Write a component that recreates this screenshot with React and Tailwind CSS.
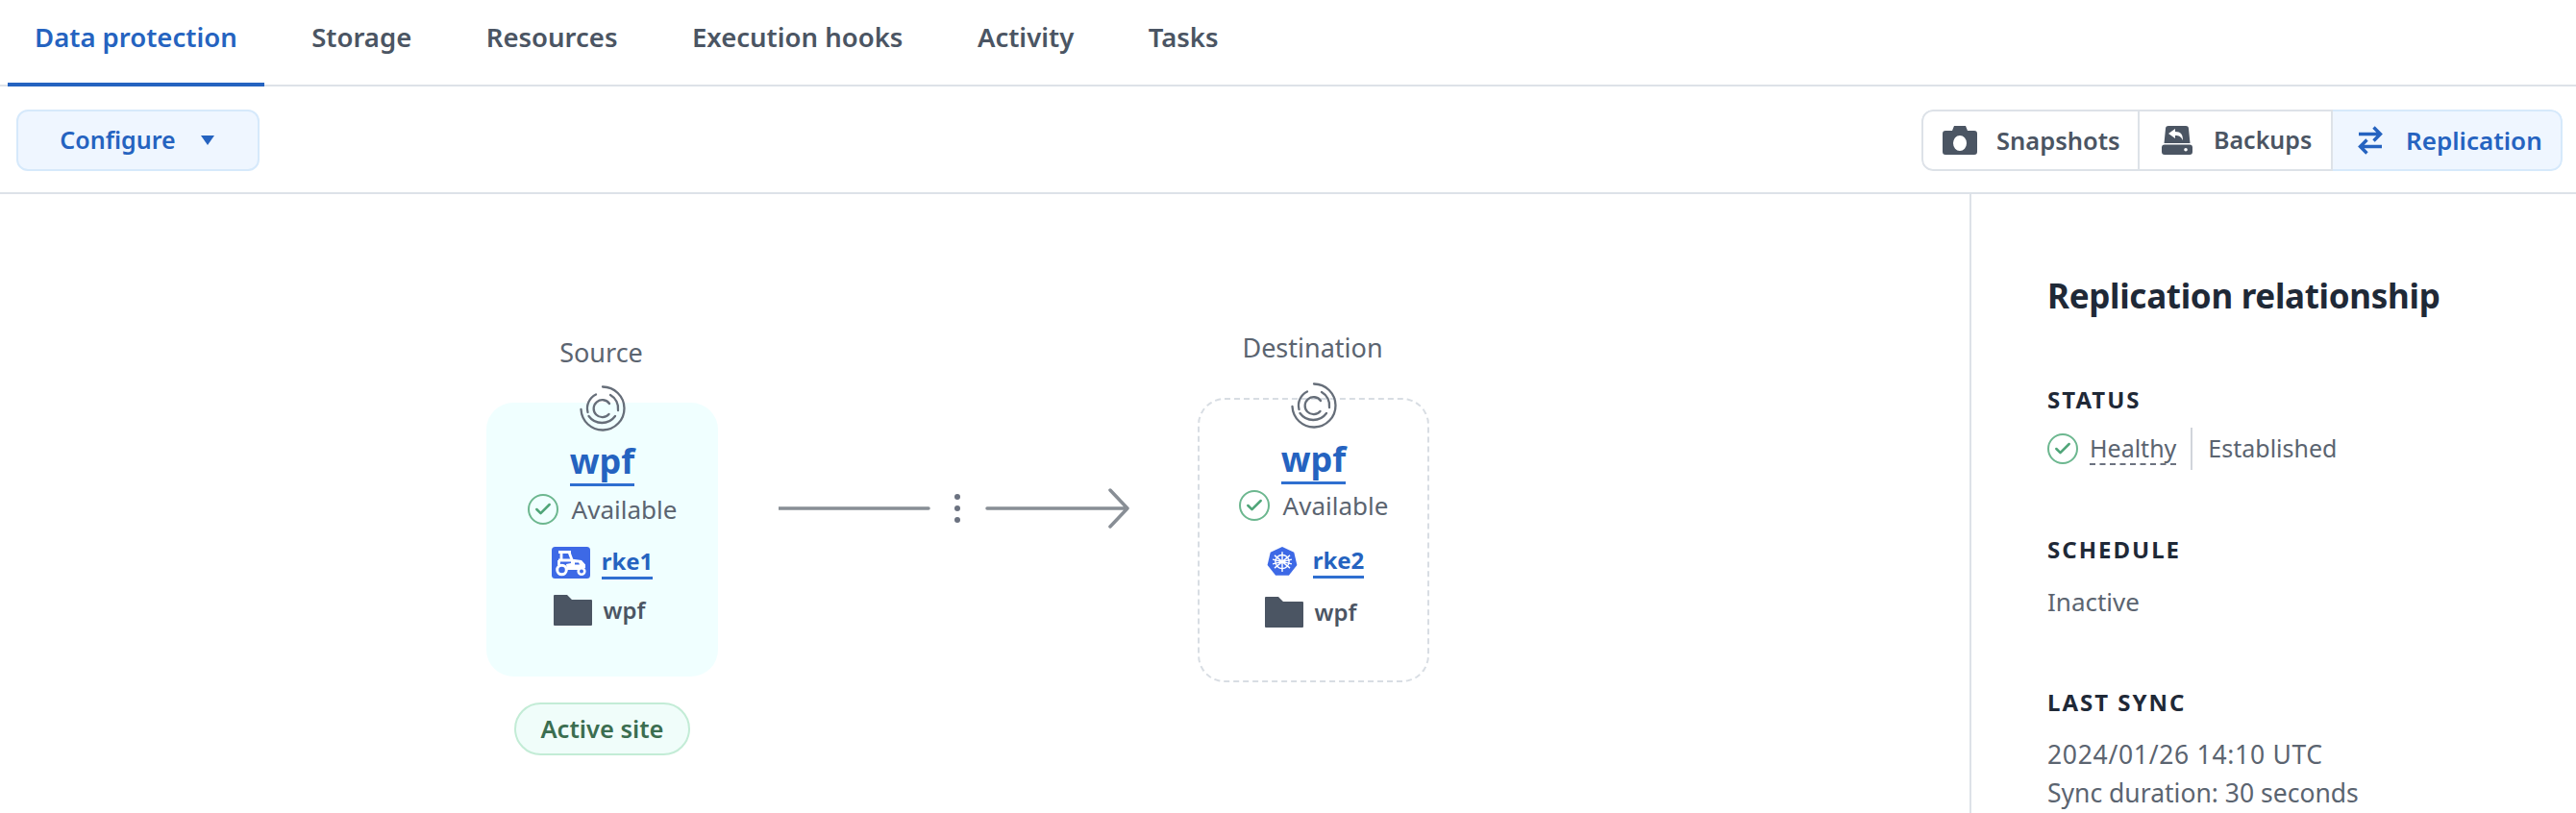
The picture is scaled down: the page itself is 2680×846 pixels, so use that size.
import { Check } from 'lucide-react'

const tabs = ['Data protection', 'Storage', 'Resources', 'Execution hooks', 'Activity', 'Tasks']

function Spiral() {
  return (
    <svg viewBox="0 0 50 50" className="w-[50px] h-[50px]" fill="none" stroke="#666e79" strokeWidth="2.300" strokeLinecap="round" aria-hidden="true">
      <path d="M25 2.500A22.500 22.500 0 1 1 2.500 26" />
      <path d="M18 10.500A16 16 0 0 0 9.500 29M10.500 33A17 17 0 0 0 38 33" />
      <path d="M33 11A16 16 0 0 1 41 27" />
      <path d="M32 20A9 9 0 1 0 31.500 31" />
    </svg>
  )
}

function CheckCircle() {
  return (
    <span className="flex w-8 h-8 shrink-0 items-center justify-center rounded-full border-2 border-[#6cb78f]">
      <Check size={20} strokeWidth={3} color="#4fa578" aria-hidden="true" />
    </span>
  )
}

function Tractor() {
  return (
    <svg viewBox="0 0 40 33" className="w-[40px] h-[33px]" aria-hidden="true">
      <rect width="40" height="33" rx="3.500" fill="#3d69e6" />
      <g fill="none" stroke="#fff" strokeWidth="2.800" strokeLinejoin="round">
        <path d="M7 5.500h13M10 5.500v7.500M18 5.500l3 8" />
        <path d="M7 14h14M7.500 14v5" />
      </g>
      <path d="M20 12.500l11 1.500 4 4.500v3.500H30l-3 2H16l-1-6 5-1z" fill="#fff" />
      <circle cx="10.500" cy="24" r="4.800" fill="#3d69e6" stroke="#fff" strokeWidth="3" />
      <circle cx="31" cy="25.500" r="3.300" fill="#3d69e6" stroke="#fff" strokeWidth="2.600" />
      <path d="M24 16.500h4l1 2h-5z" fill="#3d69e6" />
    </svg>
  )
}

function K8s() {
  return (
    <svg viewBox="0 0 36 36" className="w-[34px] h-[34px]" aria-hidden="true">
      <path d="M18 1l13 6.200 3.300 14-9 11.300H10.700l-9-11.300L5 7.200z" fill="#3d69e6" />
      <g fill="none" stroke="#fff" strokeWidth="1.500">
        <circle cx="18" cy="17.500" r="7.500" />
        <path d="M18 6.500v22M9.500 10.500l17 14M26.500 10.500l-17 14M7.500 20l21-5M28.500 20l-21-5" />
      </g>
    </svg>
  )
}

function Folder() {
  return (
    <svg viewBox="0 0 40 32" className="w-[40px] h-[32px]" aria-hidden="true">
      <path d="M1 0h13l5 5h20a1 1 0 0 1 1 1v25a1 1 0 0 1-1 1H1a1 1 0 0 1-1-1V1a1 1 0 0 1 1-1z" fill="#4b5563" />
    </svg>
  )
}

function Camera() {
  return (
    <svg viewBox="0 0 36 30" className="w-[36px] h-[30px]" aria-hidden="true">
      <path fillRule="evenodd" d="M3 5h7l2-5h12l2 5h7a3 3 0 0 1 3 3v19a3 3 0 0 1-3 3H3a3 3 0 0 1-3-3V8a3 3 0 0 1 3-3zm15 5a7 8 0 1 0 0 16 7 8 0 0 0 0-16z" fill="#4b5563" />
    </svg>
  )
}

function Backup() {
  return (
    <svg viewBox="0 0 32 30" className="w-[32px] h-[30px]" aria-hidden="true">
      <path fillRule="evenodd" d="M7 0h18a3 3 0 0 1 3 3l1.500 15H2.500L4 3a3 3 0 0 1 3-3zm7 3l-7 5 7 5v-3c4 0 6 1 8 5 0-6-2-9-8-9z" fill="#4b5563" />
      <path fillRule="evenodd" d="M3 19.500h26a3 3 0 0 1 3 3v4.500a3 3 0 0 1-3 3H3a3 3 0 0 1-3-3v-4.500a3 3 0 0 1 3-3zm22 3.500a1.800 1.800 0 1 0 0 3.600 1.800 1.800 0 0 0 0-3.600z" fill="#4b5563" />
    </svg>
  )
}

function Swap() {
  return (
    <svg viewBox="0 0 26 30" className="w-[26px] h-[30px]" fill="none" stroke="#2563c0" strokeWidth="3.400" aria-hidden="true">
      <path d="M1 8.500h22M16.500 1.500l7 7-7 7" />
      <path d="M25 21.500H3M9.500 14.500l-7 7 7 7" />
    </svg>
  )
}

function Site({ label, card, children, name = 'wpf', cluster, icon, labelClass, iconClass, nameClass, availClass, clusterClass, folderClass }) {
  return (
    <div className="flex w-[241px] shrink-0 flex-col items-center">
      <div className={`text-[27px] leading-[36px] text-[#5b6470] ${labelClass}`}>{label}</div>
      <div className={`relative flex w-full flex-col items-center rounded-[28px] ${card}`}>
        <div className={`absolute left-1/2 -translate-x-1/2 ${iconClass}`}>
          <Spiral />
        </div>
        <div className={`border-b-[3px] border-[#2f6fd0] text-[36px] leading-[46px] font-bold text-[#2563c0] ${nameClass}`}>{name}</div>
        <div className={`flex items-center gap-[14px] text-[26px] leading-[36px] text-[#5b6470] ${availClass}`}>
          <CheckCircle />
          Available
        </div>
        <div className={`flex items-center gap-[12px] ${clusterClass}`}>
          <span className="flex w-[40px] justify-center">{icon}</span>
          <span className="border-b-[3px] border-[#2f6fd0] text-[24px] leading-[32px] font-bold text-[#2563c0]">{cluster}</span>
        </div>
        <div className={`flex items-center gap-[12px] ${folderClass}`}>
          <Folder />
          <span className="min-w-[50px] text-[24px] leading-[32px] font-semibold text-[#4b5563]">{name}</span>
        </div>
      </div>
      {children}
    </div>
  )
}

function Meta({ title, className, children }) {
  return (
    <div className={className}>
      <div className="text-[24px] leading-[32px] font-bold tracking-[2px] text-[#1f2937]">{title}</div>
      {children}
    </div>
  )
}

export default function App() {
  return (
    <div className="h-[846px] w-[2680px] overflow-hidden bg-white font-['Noto_Sans',sans-serif]">
      <div className="flex h-[90px] gap-[21.500px] border-b-2 border-[#dde2e8] pl-[8px]">
        {tabs.map((t, i) => (
          <div
            key={t}
            className={`-mb-[2px] flex h-[90px] items-center border-b-[4px] px-[28px] pb-[9px] text-[27.500px] font-semibold ${
              i === 0 ? 'border-[#2563c0] text-[#2563c0]' : 'border-transparent text-[#4b5563]'
            }`}
          >
            {t}
          </div>
        ))}
      </div>

      <div className="flex h-[112px] items-center justify-between border-b-2 border-[#dde2e8] pt-[2px] pr-[14px] pl-[17px]">
        <button className="flex h-[64px] w-[253px] items-center justify-center gap-[26px] rounded-[12px] border-2 border-[#d6e9fb] bg-[#eff6ff] pr-[2px] text-[25px] font-semibold text-[#2563c0]">
          Configure
          <span className="h-0 w-0 border-x-[7px] border-t-[10px] border-x-transparent border-t-[#2563c0]" />
        </button>
        <div className="flex h-[64px] w-[667px] overflow-hidden rounded-[12px] text-[25.500px] font-semibold">
          <div className="flex w-[227px] items-center gap-[20px] rounded-l-[12px] border-2 border-[#dde2e8] pl-[20px] text-[#4b5563]">
            <Camera />
            Snapshots
          </div>
          <div className="flex w-[201px] items-center gap-[22px] border-y-2 border-r-2 border-[#dde2e8] pl-[23px] text-[25px] text-[#4b5563]">
            <Backup />
            Backups
          </div>
          <div className="flex flex-1 items-center gap-[24px] rounded-r-[12px] border-2 border-l-0 border-[#d6e9fb] bg-[#eff6ff] pl-[26px] text-[26px] text-[#2563c0]">
            <Swap />
            Replication
          </div>
        </div>
      </div>

      <div className="flex h-[644px]">
        <div className="flex w-[2049px] items-start pl-[506px]">
          <Site
            label="Source"
            card="h-[285px] bg-[#f0ffff] mt-[34px]"
            labelClass="mt-[147px] -ml-[2px]"
            iconClass="-top-[19px]"
            nameClass="mt-[38px]"
            availClass="mt-[6px]"
            clusterClass="mt-[20px]"
            folderClass="mt-[16px]"
            icon={<Tractor />}
            cluster="rke1"
          >
            <div className="mt-[27px] flex h-[55px] w-[183px] items-center justify-center rounded-full border-2 border-[#c3ecd6] bg-[#f0fdfa] text-[25.500px] font-semibold text-[#3b6e50]">
              Active site
            </div>
          </Site>

          <div className="mt-[305px] ml-[63px] flex w-[366px] items-center">
            <svg viewBox="0 0 366 44" className="h-[44px] w-[366px]" fill="none" stroke="#888e95" strokeWidth="3.500" aria-hidden="true">
              <path d="M0 22h156M217 22h146M345 3l18 19-18 19" strokeLinecap="round" strokeLinejoin="round" />
              <g fill="#6b7280" stroke="none">
                <circle cx="186" cy="10" r="3" />
                <circle cx="186" cy="22" r="3" />
                <circle cx="186" cy="34" r="3" />
              </g>
            </svg>
          </div>

          <div className="ml-[70px]">
            <Site
              label="Destination"
              card="h-[296px] border-2 border-dashed border-[#d8dde3] mt-[34px]"
              labelClass="mt-[142px] -ml-[2px]"
              iconClass="-top-[19px]"
              nameClass="mt-[39px]"
              availClass="mt-[4px]"
              clusterClass="mt-[23px]"
              folderClass="mt-[19px]"
              icon={<K8s />}
              cluster="rke2"
            />
          </div>
        </div>

        <div className="flex-1 border-l-2 border-[#dde2e8] pt-[84px] pl-[79px]">
          <div className="text-[35px] leading-[44px] font-bold tracking-[-0.3px] text-[#1f2937]">Replication relationship</div>
          <Meta title="STATUS" className="mt-[70px]">
            <div className="mt-[13px] flex h-[44px] items-center text-[25px] text-[#5b6470]">
              <CheckCircle />
              <span className="ml-[12px] border-b-2 border-dashed border-[#6b7280] leading-[32px]">Healthy</span>
              <span className="ml-[15px] h-[44px] border-l-2 border-[#d1d5db]" />
              <span className="ml-[16px]">Established</span>
            </div>
          </Meta>
          <Meta title="SCHEDULE" className="mt-[67px]">
            <div className="mt-[20px] text-[26px] leading-[36px] text-[#5b6470]">Inactive</div>
          </Meta>
          <Meta title="LAST SYNC" className="mt-[71px]">
            <div className="mt-[18px] text-[26.500px] leading-[40px] text-[#5b6470]">
              <div className="tracking-[0.7px]">2024/01/26 14:10 UTC</div>
              <div>Sync duration: 30 seconds</div>
            </div>
          </Meta>
        </div>
      </div>
    </div>
  )
}
